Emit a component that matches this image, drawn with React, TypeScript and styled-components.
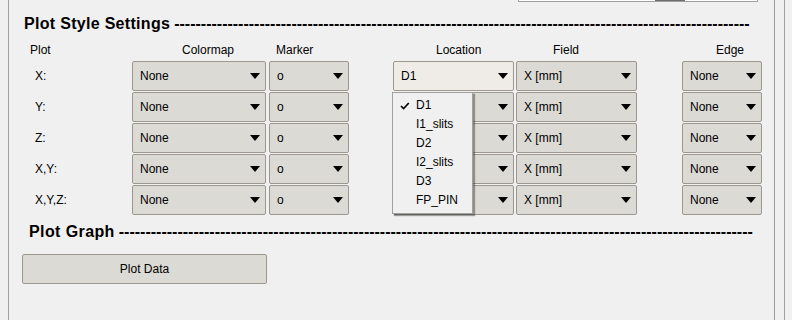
import React from "react";
import styled, { createGlobalStyle } from "styled-components";

const GlobalStyle = createGlobalStyle`
  * { box-sizing: border-box; }
  html, body {
    margin: 0;
    padding: 0;
    background: #f0f0f0;
  }
  body {
    font-family: "Liberation Sans", Arial, sans-serif;
    font-size: 12px;
    color: #000;
  }
`;

const COLUMNS = "110px 137px 124px 123px 166px 80px";

const Window = styled.div`
  width: 792px;
  height: 320px;
  display: flex;
  overflow: hidden;
  background: #f0f0f0;
`;

const Panel = styled.div`
  margin-left: 8px;
  width: 767px;
  height: 100%;
  border-left: 1px solid #a0a0a0;
  border-right: 1px solid #a0a0a0;
  padding-left: 13px;
`;

const RightEdge = styled.div`
  margin-left: 9px;
  flex: 1;
  border-left: 1px solid #a0a0a0;
`;

const TopStrip = styled.div`
  margin-left: 496px;
  width: 240px;
  height: 2px;
  background: #ffffff;
  border: 1px solid #a0a0a0;
  border-top: none;
`;

const StripThumb = styled.div`
  margin-left: 136px;
  width: 30px;
  height: 100%;
  background: #6e6e6e;
`;

const SectionTitle = styled.div<{ $indent: number; $top: number }>`
  margin-top: ${(p) => p.$top}px;
  padding-left: ${(p) => p.$indent}px;
  font-weight: bold;
  font-size: 16px;
  line-height: 20px;
  white-space: nowrap;
`;

const TitleText = styled.span<{ $spacing: number }>`
  letter-spacing: ${(p) => p.$spacing}px;
  margin-right: 4px;
`;

const HeaderRow = styled.div`
  display: grid;
  grid-template-columns: ${COLUMNS};
  margin-top: 9px;
  margin-bottom: 3px;
  height: 15px;
`;

const HeaderCell = styled.div<{ $offset: number }>`
  padding-left: ${(p) => p.$offset}px;
  line-height: 15px;
  white-space: nowrap;
`;

const Rows = styled.div`
  display: flex;
  flex-direction: column;
  gap: 1px;
`;

const Row = styled.div`
  display: grid;
  grid-template-columns: ${COLUMNS};
  height: 30px;
  align-items: center;
`;

const RowLabel = styled.div`
  padding-left: 13px;
`;

const Cell = styled.div`
  position: relative;
  height: 30px;
`;

const Combo = styled.div<{ $w: number; $active?: boolean }>`
  width: ${(p) => p.$w}px;
  height: 30px;
  display: flex;
  align-items: center;
  justify-content: space-between;
  padding: 0 5px 0 7px;
  background: ${(p) => (p.$active ? "#efece8" : "#dcdad5")};
  border: 1px solid #9c9890;
  border-radius: 2px;
  white-space: nowrap;
`;

const Arrow = styled.span`
  width: 0;
  height: 0;
  border-left: 5.5px solid transparent;
  border-right: 5.5px solid transparent;
  border-top: 6px solid #000;
`;

const Popup = styled.div`
  position: absolute;
  top: 31px;
  left: -1px;
  width: 81px;
  padding: 3px 0;
  background: #f0f0f0;
  border: 1px solid #a0a0a0;
  box-shadow: 2px 2px 1px rgba(0, 0, 0, 0.35);
  z-index: 5;
`;

const PopupItem = styled.div`
  position: relative;
  height: 19px;
  line-height: 19px;
  padding-left: 23px;
  white-space: nowrap;
`;

const Check = styled.svg`
  position: absolute;
  left: 7px;
  top: 6px;
`;

const PlotButton = styled.div`
  margin-top: 12px;
  width: 245px;
  height: 30px;
  display: flex;
  align-items: center;
  justify-content: center;
  background: #dcdad5;
  border: 1px solid #9c9890;
  border-radius: 2px;
`;

const plots = ["X:", "Y:", "Z:", "X,Y:", "X,Y,Z:"];
const locations = ["D1", "I1_slits", "D2", "I2_slits", "D3", "FP_PIN"];

const ComboBox = ({ value, width, active }: { value: string; width: number; active?: boolean }) => (
  <Combo $w={width} $active={active}>
    <span>{value}</span>
    <Arrow />
  </Combo>
);

export default function App() {
  return (
    <>
      <GlobalStyle />
      <Window>
        <Panel>
          <TopStrip>
            <StripThumb />
          </TopStrip>
          <SectionTitle $indent={2} $top={12}>
            <TitleText $spacing={0.3}>Plot Style Settings</TitleText>
            {"-".repeat(108)}
          </SectionTitle>

          <HeaderRow>
            <HeaderCell $offset={8}>Plot</HeaderCell>
            <HeaderCell $offset={50}>Colormap</HeaderCell>
            <HeaderCell $offset={7}>Marker</HeaderCell>
            <HeaderCell $offset={43}>Location</HeaderCell>
            <HeaderCell $offset={37}>Field</HeaderCell>
            <HeaderCell $offset={34}>Edge</HeaderCell>
          </HeaderRow>

          <Rows>
            {plots.map((label, i) => (
              <Row key={label}>
                <RowLabel>{label}</RowLabel>
                <Cell>
                  <ComboBox value="None" width={134} />
                </Cell>
                <Cell>
                  <ComboBox value="o" width={80} />
                </Cell>
                <Cell>
                  <ComboBox value="D1" width={121} active={i === 0} />
                  {i === 0 && (
                    <Popup>
                      {locations.map((loc, j) => (
                        <PopupItem key={loc}>
                          {j === 0 && (
                            <Check width="10" height="8" viewBox="0 0 10 8">
                              <path d="M1 4 L3.6 6.6 L8.8 1" fill="none" stroke="#000" strokeWidth="1.7" />
                            </Check>
                          )}
                          {loc}
                        </PopupItem>
                      ))}
                    </Popup>
                  )}
                </Cell>
                <Cell>
                  <ComboBox value="X [mm]" width={121} />
                </Cell>
                <Cell>
                  <ComboBox value="None" width={80} />
                </Cell>
              </Row>
            ))}
          </Rows>

          <SectionTitle $indent={7} $top={7}>
            <TitleText $spacing={0.4}>Plot Graph</TitleText>
            {"-".repeat(119)}
          </SectionTitle>

          <PlotButton>Plot Data</PlotButton>
        </Panel>
        <RightEdge />
      </Window>
    </>
  );
}
